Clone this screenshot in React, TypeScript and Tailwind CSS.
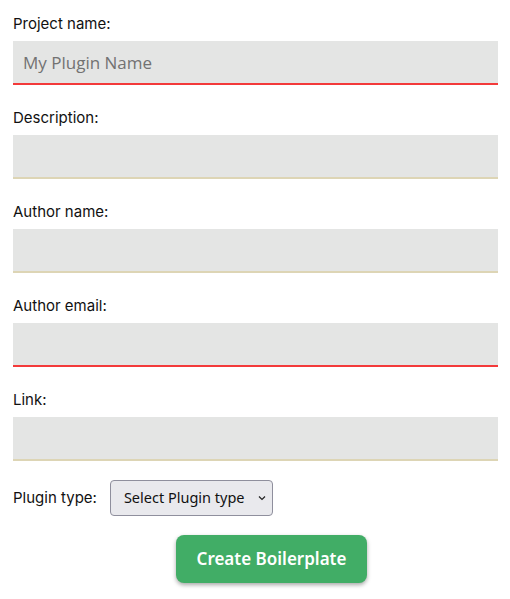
import React from "react";

const labelCls = "block font-['Inter',sans-serif] text-[15px] leading-[24px] text-[#111] mb-[5px]";
const inputBase =
  "block w-full h-[44px] bg-[#e4e5e4] border-0 border-b-2 px-[10px] font-['Open_Sans',sans-serif] text-[17px] outline-none placeholder:text-[#727272]";

function Field({ label, placeholder, invalid, last }: { label: string; placeholder?: string; invalid?: boolean; last?: boolean }) {
  return (
    <div className={last ? "mb-[19px]" : "mb-[21px]"}>
      <label className={labelCls}>{label}</label>
      <input
        className={`${inputBase} ${invalid ? "border-[#f33a3a]" : "border-[#ddd5b5]"}`}
        placeholder={placeholder}
      />
    </div>
  );
}

export default function App() {
  return (
    <div className="bg-white w-[510px] h-[599px] pl-[13px] pr-[12px] pt-[12px]">
      <Field label="Project name:" placeholder="My Plugin Name" invalid />
      <Field label="Description:" />
      <Field label="Author name:" />
      <Field label="Author email:" invalid />
      <Field label="Link:" last />
      <div className="flex items-center gap-[13px]">
        <span className="font-['Inter',sans-serif] text-[15px] text-[#111]">Plugin type:</span>
        <div className="relative w-[163px] h-[36px] border border-[#8f8f9d] rounded-[4px] bg-[#e9e9ed] flex items-center pl-[13px]">
          <span className="font-['Noto_Sans',sans-serif] text-[14.5px] text-[#111]">Select Plugin type</span>
          <svg className="absolute right-[6px] top-[14px]" width="8" height="6" viewBox="0 0 8 6">
            <path d="M1 1.5 L4 4.5 L7 1.5" fill="none" stroke="#222" strokeWidth="1.2" />
          </svg>
        </div>
      </div>
      <button className="mt-[19px] ml-[163px] w-[191px] h-[48px] rounded-[8px] bg-[#41ad66] text-white font-['Noto_Sans',sans-serif] text-[17px] font-semibold shadow-[0_2px_4px_rgba(0,0,0,0.35)]">
        Create Boilerplate
      </button>
    </div>
  );
}
